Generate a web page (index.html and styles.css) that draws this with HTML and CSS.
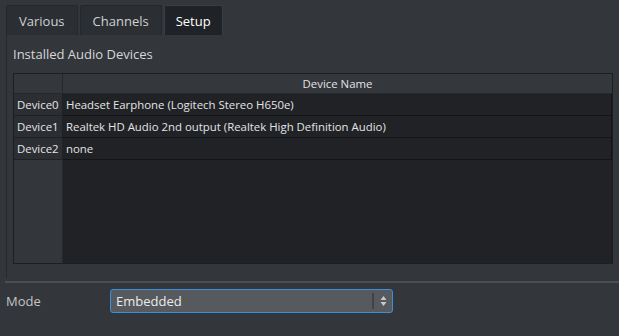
FILE: index.html
```html
<!DOCTYPE html>
<html>
<head>
<title>Setup</title>
<link rel="stylesheet" href="styles.css">
</head>
<body>
<div class="tabbar">
  <div class="tab">Various</div>
  <div class="tab">Channels</div>
  <div class="tab active">Setup</div>
</div>
<div class="pane">
  <div class="caption">Installed Audio Devices</div>
  <div class="devtable">
    <div class="corner"></div>
    <div class="colhead">Device Name</div>
    <div class="rowhead">Device0</div>
    <div class="cell">Headset Earphone (Logitech Stereo H650e)</div>
    <div class="rowhead">Device1</div>
    <div class="cell">Realtek HD Audio 2nd output (Realtek High Definition Audio)</div>
    <div class="rowhead">Device2</div>
    <div class="cell">none</div>
    <div class="rowfill"></div>
    <div class="cellfill"></div>
  </div>
</div>
<div class="sep"></div>
<div class="moderow">
  <div class="label">Mode</div>
  <div class="combo">
    <span class="combo-text">Embedded</span>
    <span class="combo-btn">
      <svg width="7" height="12" viewBox="0 0 7 12"><path d="M3.5 1 L6.5 5 L0.5 5 Z M3.5 11 L6.5 7 L0.5 7 Z" fill="#c8c8c8"/></svg>
    </span>
  </div>
</div>
</body>
</html>
```
FILE: styles.css
```css
/* dark theme device setup page */

body
{ margin: 0;
background-color: #33363b;
font-family: "Open Sans", "Noto Sans", sans-serif;
color: #dadada;
width: 619px;
height: 336px;
overflow: hidden;
}

div.tabbar
{ display: flex;
gap: 2px;
padding: 5px 0 0 6px;
height: 30px;
}

div.tab
{ box-sizing: border-box;
height: 30px;
padding: 0 12px;
line-height: 31px;
font-size: 13px;
color: #cfd0d2;
background-color: #2b2e33;
border: 1px solid #24272b;
border-bottom: none;
border-radius: 2px 2px 0 0;
}

div.tab.active
{ background-color: #1f2227;
color: #ffffff;
border-color: #3a3d42;
padding: 0 11px;
}

div.pane
{ margin-left: 6px;
border-left: 1px solid #25282c;
height: 243px;
padding: 0 0 0 6px;
}

div.caption
{ font-size: 13px;
height: 38px;
line-height: 38px;
color: #d6d7d8;
}

div.devtable
{ display: grid;
grid-template-columns: 49px 549px;
grid-template-rows: 20px 22px 22px 22px 1fr;
height: 191px;
width: 600px;
box-sizing: border-box;
border: 1px solid #1c1e21;
font-size: 11.4px;
}

div.corner
{ background-color: #34373c;
border-right: 1px solid #25282c;
border-bottom: 1px solid #25282c;
}

div.colhead
{ background-color: #34373c;
border-bottom: 1px solid #25282c;
text-align: center;
line-height: 19px;
color: #e2e2e2;
}

div.rowhead
{ background-color: #2b2e32;
border-right: 1px solid #1f2125;
border-bottom: 1px solid #1f2125;
padding-left: 3px;
line-height: 21px;
color: #e6e6e6;
}

div.cell
{ background-color: #202226;
border-bottom: 1px solid #131518;
border-right: 1px solid #131518;
padding-left: 3px;
line-height: 21px;
color: #e4e4e4;
white-space: nowrap;
}

div.rowfill
{ background-color: #33363b;
border-right: 1px solid #25282c;
}

div.cellfill
{ background-color: #202226;
border-right: 1px solid #1c1e21;
}

div.sep
{ margin: 3px 0 0 5px;
height: 2px;
background-color: #4b4e52;
}

div.moderow
{ display: flex;
align-items: center;
padding: 6px 0 0 6px;
}

div.label
{ width: 104px;
font-size: 13px;
color: #c4c5c7;
}

div.combo
{ display: flex;
align-items: center;
box-sizing: border-box;
width: 283px;
height: 24px;
background-color: #56595d;
border: 1px solid #3c8fd9;
border-radius: 3px;
}

span.combo-text
{ flex: 1;
padding-left: 5px;
font-size: 13px;
color: #ececec;
}

span.combo-btn
{ display: flex;
align-items: center;
justify-content: center;
width: 18px;
height: 16px;
border-left: 2px solid #404347;
}
```
